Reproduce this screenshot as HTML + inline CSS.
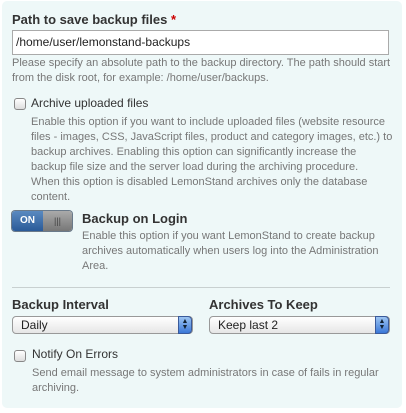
<!DOCTYPE html>
<html><head><style>
body{margin:0;width:406px;height:413px;background:#fff;font-family:"Liberation Sans",sans-serif;position:relative;overflow:hidden}
.box{position:absolute;left:2px;top:1px;width:400px;height:407px;background:#eef8f8;border-radius:5px}
.a{position:absolute;white-space:nowrap}
.lbl{font-size:13px;font-weight:bold;color:#333}
.help{font-size:11px;color:#777;line-height:15px}
.cb{position:absolute;width:10px;height:10px;border:1px solid #888;border-radius:3px;background:linear-gradient(#fff,#ddd)}
.sel{position:absolute;border:1px solid #999;border-radius:4px;background:linear-gradient(#fff,#e6e6e6);font-size:12px;color:#222;line-height:16px;padding-left:8px;box-sizing:border-box;height:18px}
.arr{position:absolute;right:0;top:-1px;width:14px;height:18px;border-radius:0 4px 4px 0;background:linear-gradient(#9cc4f2,#3a78d8);border:1px solid #3a5a9a;box-sizing:border-box;color:#123;font-size:7px;line-height:6px;text-align:center;padding-top:2px}
</style></head><body>
<div class="box"></div>
<div class="a lbl" style="left:12px;top:12px">Path to save backup files <span style="color:#c00">*</span></div>
<div class="a" style="left:12px;top:30px;width:377px;height:25px;border:1px solid #aaa;background:#fff;box-sizing:border-box;font-size:12px;color:#222;line-height:23px;padding-left:3px">/home/user/lemonstand-backups</div>
<div class="a help" style="left:12px;top:56px">Please specify an absolute path to the backup directory. The path should start<br>from the disk root, for example: /home/user/backups.</div>
<div class="cb" style="left:14px;top:98px"></div>
<div class="a" style="left:31px;top:96px;font-size:12px;color:#333">Archive uploaded files</div>
<div class="a help" style="left:31px;top:115px">Enable this option if you want to include uploaded files (website resource<br>files - images, CSS, JavaScript files, product and category images, etc.) to<br>backup archives. Enabling this option can significantly increase the<br>backup file size and the server load during the archiving procedure.<br>When this option is disabled LemonStand archives only the database<br>content.</div>
<div class="a" style="left:12px;top:211px;width:60px;height:20px;border-radius:3px;overflow:hidden;box-shadow:0 0 0 1px #6a7a8a">
<div class="a" style="left:0;top:0;width:31px;height:20px;background:linear-gradient(#5a8ac0,#2a5a98);color:#fff;font-size:10px;font-weight:bold;line-height:20px;text-align:center">ON</div>
<div class="a" style="left:31px;top:0;width:29px;height:20px;background:linear-gradient(#aaa,#777);color:#444;font-size:9px;line-height:20px;text-align:center">|||</div></div>
<div class="a lbl" style="left:82px;top:211px">Backup on Login</div>
<div class="a help" style="left:82px;top:229px">Enable this option if you want LemonStand to create backup<br>archives automatically when users log into the Administration<br>Area.</div>
<div class="a" style="left:12px;top:287px;width:378px;height:1px;background:#c8d0d0"></div>
<div class="a lbl" style="left:12px;top:297px">Backup Interval</div>
<div class="a lbl" style="left:209px;top:297px">Archives To Keep</div>
<div class="sel" style="left:12px;top:316px;width:181px">Daily<div class="arr">▲<br>▼</div></div>
<div class="sel" style="left:209px;top:316px;width:181px">Keep last 2<div class="arr">▲<br>▼</div></div>
<div class="cb" style="left:14px;top:350px"></div>
<div class="a" style="left:32px;top:347px;font-size:12px;color:#333">Notify On Errors</div>
<div class="a help" style="left:32px;top:366px">Send email message to system administrators in case of fails in regular<br>archiving.</div>
</body></html>
